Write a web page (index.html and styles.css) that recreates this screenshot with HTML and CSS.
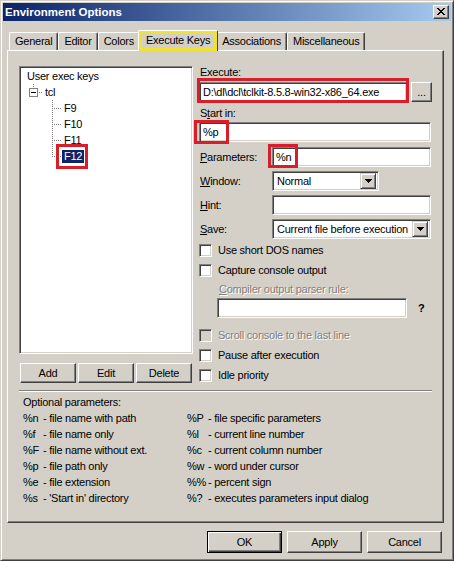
FILE: index.html
```html
<!DOCTYPE html>
<html lang="en">
<head>
<meta charset="utf-8">
<title>Environment Options</title>
<link rel="stylesheet" href="styles.css">
</head>
<body>
<div class="window">
  <div class="titlebar">
    <span class="title">Environment Options</span>
    <button class="close" aria-label="Close">
      <svg width="8" height="7" viewBox="0 0 8 7" shape-rendering="crispEdges"><path fill="#000" d="M0 0h2v1H0z M6 0h2v1H6z M1 1h2v1H1z M5 1h2v1H5z M2 2h4v1H2z M3 3h2v1H3z M2 4h4v1H2z M1 5h2v1H1z M5 5h2v1H5z M0 6h2v1H0z M6 6h2v1H6z"/></svg>
    </button>
  </div>

  <div class="tabs">
    <div class="tab">General</div>
    <div class="tab">Editor</div>
    <div class="tab">Colors</div>
    <div class="tab active"><span class="tab-mark"></span>Execute Keys</div>
    <div class="tab">Associations</div>
    <div class="tab">Miscellaneous</div>
  </div>

  <div class="panel">
    <div class="panel-main">
      <div class="left-col">
        <div class="tree">
          <div class="tree-row"><span class="node-label">User exec keys</span></div>
          <div class="tree-row node-root">
            <svg class="tree-svg" width="14" height="16" viewBox="0 0 14 16" shape-rendering="crispEdges">
              <line x1="4.5" y1="0" x2="4.5" y2="4" stroke="#808080" stroke-dasharray="1 1"/>
              <rect x="0.5" y="4.5" width="8" height="8" fill="#fff" stroke="#808080"/>
              <line x1="2" y1="8.5" x2="7" y2="8.5" stroke="#000"/>
              <line x1="10" y1="8.5" x2="14" y2="8.5" stroke="#808080" stroke-dasharray="1 1"/>
            </svg>
            <span class="node-label">tcl</span>
          </div>
          <div class="tree-row node-child">
            <svg class="tree-svg" width="10" height="16" viewBox="0 0 10 16" shape-rendering="crispEdges">
              <line x1="0.5" y1="0" x2="0.5" y2="16" stroke="#808080" stroke-dasharray="1 1"/>
              <line x1="2" y1="8.5" x2="10" y2="8.5" stroke="#808080" stroke-dasharray="1 1"/>
            </svg>
            <span class="node-label">F9</span>
          </div>
          <div class="tree-row node-child">
            <svg class="tree-svg" width="10" height="16" viewBox="0 0 10 16" shape-rendering="crispEdges">
              <line x1="0.5" y1="0" x2="0.5" y2="16" stroke="#808080" stroke-dasharray="1 1"/>
              <line x1="2" y1="8.5" x2="10" y2="8.5" stroke="#808080" stroke-dasharray="1 1"/>
            </svg>
            <span class="node-label">F10</span>
          </div>
          <div class="tree-row node-child">
            <svg class="tree-svg" width="10" height="16" viewBox="0 0 10 16" shape-rendering="crispEdges">
              <line x1="0.5" y1="0" x2="0.5" y2="16" stroke="#808080" stroke-dasharray="1 1"/>
              <line x1="2" y1="8.5" x2="10" y2="8.5" stroke="#808080" stroke-dasharray="1 1"/>
            </svg>
            <span class="node-label">F11</span>
          </div>
          <div class="tree-row node-child">
            <svg class="tree-svg" width="10" height="16" viewBox="0 0 10 16" shape-rendering="crispEdges">
              <line x1="0.5" y1="0" x2="0.5" y2="9" stroke="#808080" stroke-dasharray="1 1"/>
              <line x1="2" y1="8.5" x2="10" y2="8.5" stroke="#808080" stroke-dasharray="1 1"/>
            </svg>
            <span class="node-label selected">F12<span class="mark mark-f12"></span></span>
          </div>
        </div>
        <div class="tree-buttons">
          <button class="btn btn-small">Add</button>
          <button class="btn btn-small">Edit</button>
          <button class="btn btn-small">Delete</button>
        </div>
      </div>

      <div class="right-col">
        <div class="lbl">Execute:</div>
        <div class="exec-row">
          <div class="field field-exec">D:\dl\dcl\tclkit-8.5.8-win32-x86_64.exe<span class="mark mark-exec"></span></div>
          <button class="btn btn-browse">...</button>
        </div>
        <div class="lbl lbl-start">S<u>t</u>art in:</div>
        <div class="field field-start">%p<span class="mark mark-start"></span></div>

        <div class="form-grid">
          <div class="lbl"><u>P</u>arameters:</div>
          <div class="field">%n<span class="mark mark-params"></span></div>

          <div class="lbl"><u>W</u>indow:</div>
          <div class="field select select-window">
            <span class="select-text">Normal</span>
            <span class="arrow-btn"><svg width="7" height="4" viewBox="0 0 7 4" shape-rendering="crispEdges"><path fill="#000" d="M0 0h7v1H0z M1 1h5v1H1z M2 2h3v1H2z M3 3h1v1H3z"/></svg></span>
          </div>

          <div class="lbl"><u>H</u>int:</div>
          <div class="field"></div>

          <div class="lbl"><u>S</u>ave:</div>
          <div class="field select">
            <span class="select-text">Current file before execution</span>
            <span class="arrow-btn"><svg width="7" height="4" viewBox="0 0 7 4" shape-rendering="crispEdges"><path fill="#000" d="M0 0h7v1H0z M1 1h5v1H1z M2 2h3v1H2z M3 3h1v1H3z"/></svg></span>
          </div>
        </div>

        <div class="checks checks-top">
          <div class="check-row"><span class="check"></span><span>Use short DOS names</span></div>
          <div class="check-row"><span class="check"></span><span>Capture console output</span></div>
        </div>

        <div class="lbl lbl-compiler disabled"><u>C</u>ompiler output parser rule:</div>
        <div class="compiler-row">
          <div class="field field-compiler"></div>
          <span class="help">?</span>
        </div>

        <div class="checks checks-bottom">
          <div class="check-row disabled"><span class="check check-disabled"></span><span>Scroll console to the last line</span></div>
          <div class="check-row"><span class="check"></span><span>Pause after execution</span></div>
          <div class="check-row"><span class="check"></span><span>Idle priority</span></div>
        </div>
      </div>
    </div>

    <div class="separator"></div>

    <div class="params">
      <div class="params-head">Optional parameters:</div>
      <div class="params-grid">
        <div><span class="code">%n</span>- file name with path</div>
        <div><span class="code code-r">%P</span>- file specific parameters</div>
        <div><span class="code">%f</span>- file name only</div>
        <div><span class="code code-r">%l</span>- current line number</div>
        <div><span class="code">%F</span>- file name without ext.</div>
        <div><span class="code code-r">%c</span>- current column number</div>
        <div><span class="code">%p</span>- file path only</div>
        <div><span class="code code-r">%w</span>- word under cursor</div>
        <div><span class="code">%e</span>- file extension</div>
        <div><span class="code code-r">%%</span>- percent sign</div>
        <div><span class="code">%s</span>- 'Start in' directory</div>
        <div><span class="code code-r">%?</span>- executes parameters input dialog</div>
      </div>
    </div>
  </div>

  <div class="dialog-buttons">
    <button class="btn btn-dialog btn-default">OK</button>
    <button class="btn btn-dialog">Apply</button>
    <button class="btn btn-dialog">Cancel</button>
  </div>
</div>
</body>
</html>
```

FILE: styles.css
```css
* {
  box-sizing: border-box;
}

html,
body {
  margin: 0;
  padding: 0;
}

body {
  font-family: "Liberation Sans", Arial, sans-serif;
  font-size: 11px;
  letter-spacing: -0.25px;
  color: #000;
  background: #d4d0c8;
}

u {
  text-decoration: underline;
  text-underline-offset: 1px;
}

/* ---------- window frame ---------- */
.window {
  width: 454px;
  height: 561px;
  background: #d4d0c8;
  border: 1px solid;
  border-color: #d4d0c8 #404040 #404040 #d4d0c8;
  box-shadow: inset 1px 1px #fff, inset -1px -1px #808080;
  padding: 2px;
  display: flex;
  flex-direction: column;
}

.titlebar {
  height: 18px;
  flex: none;
  display: flex;
  align-items: center;
  justify-content: space-between;
  padding: 0 2px;
  background: linear-gradient(to right, #0a246a, #a6caf0);
}

.title {
  color: #fff;
  font-weight: bold;
  font-size: 11.5px;
  letter-spacing: 0;
  line-height: 18px;
}

.close {
  width: 16px;
  height: 14px;
  margin: 0;
  padding: 0 0 1px 0;
  background: #d4d0c8;
  border: 1px solid;
  border-color: #fff #404040 #404040 #fff;
  box-shadow: inset -1px -1px #808080;
  display: flex;
  align-items: center;
  justify-content: center;
}

.close svg {
  display: block;
}

/* ---------- tabs ---------- */
.tabs {
  display: flex;
  align-items: flex-end;
  height: 20px;
  margin: 9px 0 0 6px;
  flex: none;
}

.tab {
  height: 18px;
  line-height: 17px;
  padding: 0 5px;
  white-space: nowrap;
  border-top: 1px solid #fff;
  border-left: 1px solid #fff;
  border-right: 1px solid #404040;
  box-shadow: inset -1px 0 #808080;
  border-radius: 2px 2px 0 0;
  background: #d4d0c8;
}

.tab.active {
  position: relative;
  z-index: 1;
  height: 21px;
  line-height: 18px;
  margin: 0 -2px -1px;
  padding: 0 7px;
}

.tab-mark {
  position: absolute;
  top: 0;
  left: 0;
  right: 0;
  bottom: 0;
  border: 3px solid #efe136;
  pointer-events: none;
}

/* ---------- panel ---------- */
.panel {
  flex: none;
  margin-left: 4px;
  width: 437px;
  height: 473px;
  border-top: 1px solid #fff;
  border-left: 1px solid #fff;
  border-right: 1px solid #404040;
  border-bottom: 1px solid #404040;
  box-shadow: inset -1px -1px #808080;
  padding: 15px 0 0 11px;
}

.panel-main {
  display: flex;
  gap: 6px;
}

.left-col {
  width: 174px;
}

.right-col {
  width: 233px;
}

/* ---------- tree ---------- */
.tree {
  height: 288px;
  background: #fff;
  border: 1px solid;
  border-color: #808080 #fff #fff #808080;
  box-shadow: inset 1px 1px #404040, inset -1px -1px #d4d0c8;
  padding: 1px 0 0 5px;
}

.tree-row {
  height: 16px;
  display: flex;
  align-items: center;
  white-space: nowrap;
}

.tree-svg {
  display: block;
  flex: none;
}

.node-root {
  margin-left: 4px;
}

.node-child {
  margin-left: 27px;
}

.node-label {
  line-height: 13px;
  padding: 0 2px;
}

.node-label.selected {
  position: relative;
  background: #0a246a;
  color: #fff;
}

/* red annotation boxes */
.mark {
  position: absolute;
  border: 3px solid #d81e28;
  pointer-events: none;
}

.mark-f12 {
  top: -6px;
  bottom: -6px;
  left: -6px;
  right: -4px;
}

.mark-exec {
  left: -3px;
  right: -3px;
  top: -5px;
  bottom: -2px;
}

.mark-start {
  left: -6px;
  top: -3px;
  width: 35px;
  height: 24px;
}

.mark-params {
  left: -5px;
  top: -4px;
  width: 30px;
  height: 24px;
}

/* ---------- buttons ---------- */
.btn {
  margin: 0;
  padding: 0;
  font: inherit;
  letter-spacing: inherit;
  color: #000;
  background: #d4d0c8;
  border: 1px solid;
  border-color: #fff #404040 #404040 #fff;
  box-shadow: inset -1px -1px #808080;
  display: flex;
  align-items: center;
  justify-content: center;
}

.tree-buttons {
  display: flex;
  gap: 2px;
  margin-top: 9px;
  padding-left: 1px;
}

.btn-small {
  width: 56px;
  height: 20px;
}

.btn-browse {
  width: 21px;
  height: 20px;
  align-items: flex-end;
  padding-bottom: 3px;
}

.btn-dialog {
  width: 75px;
  height: 22px;
}

.btn-default {
  border-color: #000;
  box-shadow: inset 1px 1px #fff, inset -1px -1px #404040, inset -2px -2px #808080;
}

/* ---------- form ---------- */
.lbl {
  height: 13px;
  line-height: 13px;
  padding-left: 1px;
  white-space: nowrap;
}

.exec-row {
  display: flex;
  gap: 4px;
  margin-top: 3px;
}

.field {
  position: relative;
  height: 20px;
  background: #fff;
  border: 1px solid;
  border-color: #808080 #fff #fff #808080;
  box-shadow: inset 1px 1px #404040, inset -1px -1px #d4d0c8;
  padding-left: 3px;
  line-height: 18px;
  white-space: nowrap;
}

.field-exec {
  width: 208px;
}

.lbl-start {
  margin-top: 5px;
}

.field-start {
  width: 232px;
  margin-top: 2px;
}

.form-grid {
  display: grid;
  grid-template-columns: 73px 159px;
  row-gap: 4px;
  align-items: center;
  margin-top: 5px;
}

.select {
  display: flex;
  align-items: center;
  justify-content: space-between;
  padding: 2px;
}

.select-window {
  width: 107px;
}

.select-text {
  padding-left: 2px;
  line-height: 16px;
}

.arrow-btn {
  width: 16px;
  height: 16px;
  flex: none;
  background: #d4d0c8;
  border: 1px solid;
  border-color: #d4d0c8 #404040 #404040 #d4d0c8;
  box-shadow: inset 1px 1px #fff, inset -1px -1px #808080;
  display: flex;
  align-items: center;
  justify-content: center;
}

.arrow-btn svg {
  display: block;
}

.checks-top {
  margin-top: 1px;
}

.checks-bottom {
  margin-top: 7px;
}

.check-row {
  height: 20px;
  display: flex;
  align-items: center;
  gap: 6px;
  white-space: nowrap;
}

.check {
  width: 13px;
  height: 13px;
  flex: none;
  background: #fff;
  border: 1px solid;
  border-color: #808080 #fff #fff #808080;
  box-shadow: inset 1px 1px #404040, inset -1px -1px #d4d0c8;
}

.check-disabled {
  background: #d4d0c8;
}

.disabled {
  color: #808080;
  text-shadow: 1px 1px 0 #fff;
}

.lbl-compiler {
  margin-top: 2px;
  height: 14px;
  line-height: 14px;
  padding-left: 20px;
}

.compiler-row {
  display: flex;
  align-items: center;
  margin-top: 2px;
  padding-left: 18px;
}

.field-compiler {
  width: 190px;
}

.help {
  margin-left: 11px;
  font-weight: bold;
}

/* ---------- separator + params ---------- */
.separator {
  width: 413px;
  height: 2px;
  margin-top: 5px;
  border-top: 1px solid #808080;
  border-bottom: 1px solid #fff;
}

.params {
  margin-top: 2px;
  padding-left: 4px;
  line-height: 16px;
}

.params-grid {
  display: grid;
  grid-template-columns: 164px auto;
  white-space: nowrap;
}

.code {
  display: inline-block;
  width: 20px;
}

.code-r {
  width: 21px;
}

/* ---------- dialog buttons ---------- */
.dialog-buttons {
  display: flex;
  justify-content: flex-end;
  gap: 5px;
  margin-top: 8px;
  padding-right: 9px;
}
```
